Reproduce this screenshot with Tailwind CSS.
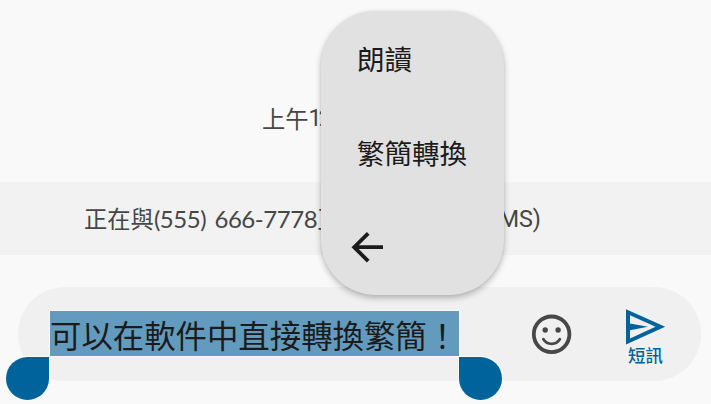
<!DOCTYPE html>
<html lang="zh-Hant">
<head>
<meta charset="utf-8">
<title>訊息</title>
<script src="https://cdn.jsdelivr.net/npm/@tailwindcss/browser@4"></script>
</head>
<body class="bg-[#f9f9f9] overflow-hidden font-['Noto_Sans_CJK_TC',sans-serif]">
<main class="relative flex h-[404px] w-[711px] flex-col overflow-hidden">
  <!-- Conversation -->
  <div class="flex h-[182px] items-start pt-[100px] pl-[262px] text-[23.3px] leading-[36px] text-[#444746]">
    <span>上午</span><span class="font-['Roboto',sans-serif] tracking-[-3px]">12</span>
  </div>
  <div class="flex h-[73px] items-center justify-between bg-[#f2f2f2] pr-[170px] pl-[84px] text-[23.3px] leading-[36px] whitespace-nowrap text-[#444746]">
    <div class="flex"><span>正在與</span><span class="pt-px font-['Lato',sans-serif] text-[24px] tracking-[-0.45px] [word-spacing:2.5px] whitespace-pre">(555) 666-7778</span><span>互</span></div>
    <span class="pt-px font-['Roboto',sans-serif]">MS)</span>
  </div>

  <!-- Composer -->
  <div class="mt-8 mr-[10px] ml-[18px] flex h-[94px] shrink-0 rounded-full bg-[#f0f0f0]">
    <div class="mt-6 ml-8 h-[45px] w-[409px] shrink-0 bg-[#629bbe] text-[31.4px] leading-[48px] whitespace-nowrap text-[#1b1b1b] shadow-[0_0_0_1px_#f7f9fa]">可以在軟件中直接轉換繁簡！</div>
    <svg class="mt-[27px] ml-[72px] size-[41px] shrink-0" viewBox="0 0 41 41" fill="none" stroke="#474747">
      <circle cx="20.6" cy="20.3" r="17.8" stroke-width="3.8"/>
      <circle cx="14.2" cy="16" r="2.7" fill="#474747" stroke="none"/>
      <circle cx="27.1" cy="16" r="2.7" fill="#474747" stroke="none"/>
      <path d="M12.4 25.3a9.7 9.7 0 0 0 16.4 0" stroke-width="2.8" stroke-linecap="round"/>
    </svg>
    <div class="mt-[21px] ml-[53px] flex w-10 shrink-0 flex-col text-[#00639b]">
      <svg class="ml-[1px] h-[38px] w-[40px]" viewBox="0 0 40 38" fill="currentColor" fill-rule="evenodd">
        <path d="M0 1.3 39.2 18.8 0 36.5ZM4 7.2V15.5L22 18.8 4 22.3V30.5L29.6 18.8Z"/>
      </svg>
      <span class="ml-[3px] text-[17.4px] leading-[18px] font-medium whitespace-nowrap">短訊</span>
    </div>
  </div>

  <!-- Selection handles -->
  <div class="absolute top-[357px] left-[6px] h-[43px] w-[43px] rounded-full rounded-tr-none bg-[#00639b] shadow-[0_0_0_1px_#f7f9fa]"></div>
  <div class="absolute top-[357px] left-[459px] h-[43px] w-[43px] rounded-full rounded-tl-none bg-[#00639b] shadow-[0_0_0_1px_#f7f9fa]"></div>

  <!-- Text actions menu -->
  <div class="absolute top-[11px] left-[321px] flex h-[284px] w-[183px] flex-col rounded-[55px] bg-[#e1e1e1] pl-[36px] text-[27.5px] leading-[40px] text-[#1b1b1b] shadow-[0_3px_6px_rgba(0,0,0,0.26),0_0_3px_rgba(0,0,0,0.06)]">
    <span class="mt-[27px]">朗讀</span>
    <span class="mt-[54px]">繁簡轉換</span>
    <svg class="mt-[59px] -ml-[6px] h-[32px] w-[33px]" viewBox="0 0 33 32" fill="none" stroke="#1b1b1b" stroke-width="3.8">
      <path d="M32 16.2H4M17.2 2.3 3.2 16.2 17.2 30.2"/>
    </svg>
  </div>
</main>
</body>
</html>
